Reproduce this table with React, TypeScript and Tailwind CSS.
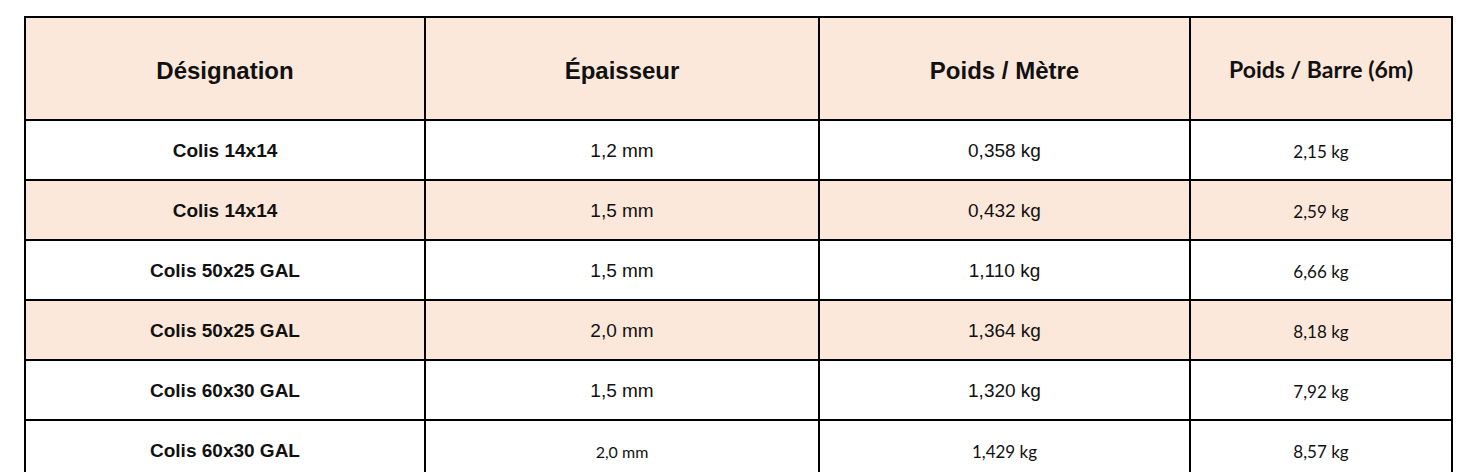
const arial = "font-['Liberation_Sans',Arial,sans-serif]";
const calibri = "font-['Lato',Carlito,Calibri,sans-serif]";

type Cell = { text: string; calibri?: boolean; small?: boolean };

const rows: { tint: boolean; cells: Cell[] }[] = [
  { tint: false, cells: [{ text: "Colis 14x14" }, { text: "1,2 mm" }, { text: "0,358 kg" }, { text: "2,15 kg", calibri: true }] },
  { tint: true, cells: [{ text: "Colis 14x14" }, { text: "1,5 mm" }, { text: "0,432 kg" }, { text: "2,59 kg", calibri: true }] },
  { tint: false, cells: [{ text: "Colis 50x25 GAL" }, { text: "1,5 mm" }, { text: "1,110 kg" }, { text: "6,66 kg", calibri: true }] },
  { tint: true, cells: [{ text: "Colis 50x25 GAL" }, { text: "2,0 mm" }, { text: "1,364 kg" }, { text: "8,18 kg", calibri: true }] },
  { tint: false, cells: [{ text: "Colis 60x30 GAL" }, { text: "1,5 mm" }, { text: "1,320 kg" }, { text: "7,92 kg", calibri: true }] },
  { tint: false, cells: [{ text: "Colis 60x30 GAL" }, { text: "2,0 mm", calibri: true, small: true }, { text: "1,429 kg", calibri: true }, { text: "8,57 kg", calibri: true }] },
];

export default function App() {
  return (
    <div className="min-h-screen bg-white pt-[16px] pl-[24px]">
      <table className="w-[1429px] table-fixed border-collapse border-2 border-black text-[#111]">
        <colgroup>
          <col className="w-[400px]" />
          <col className="w-[394px]" />
          <col className="w-[371px]" />
          <col className="w-[262px]" />
        </colgroup>
        <thead>
          <tr className="h-[103px] bg-[#fce8da]">
            <th className={`border-2 border-black pt-[4px] text-[24px] font-bold ${arial}`}>Désignation</th>
            <th className={`border-2 border-black pt-[4px] text-[24px] font-bold ${arial}`}>Épaisseur</th>
            <th className={`border-2 border-black pt-[4px] text-[24px] font-bold ${arial}`}>Poids / Mètre</th>
            <th className={`border-2 border-black pt-[2px] text-[23px] font-bold ${calibri}`}>Poids / Barre (6m)</th>
          </tr>
        </thead>
        <tbody>
          {rows.map((row, i) => (
            <tr key={i} className={`h-[60px] ${row.tint ? "bg-[#fce8da]" : "bg-white"}`}>
              {row.cells.map((c, j) => (
                <td
                  key={j}
                  className={`border-2 border-black pt-[3px] text-center ${
                    c.calibri ? `${calibri} ${c.small ? "text-[16px]" : "text-[17px]"}` : `${arial} text-[19px]`
                  } ${j === 0 ? "font-bold" : ""}`}
                >
                  {c.text}
                </td>
              ))}
            </tr>
          ))}
        </tbody>
      </table>
    </div>
  );
}
